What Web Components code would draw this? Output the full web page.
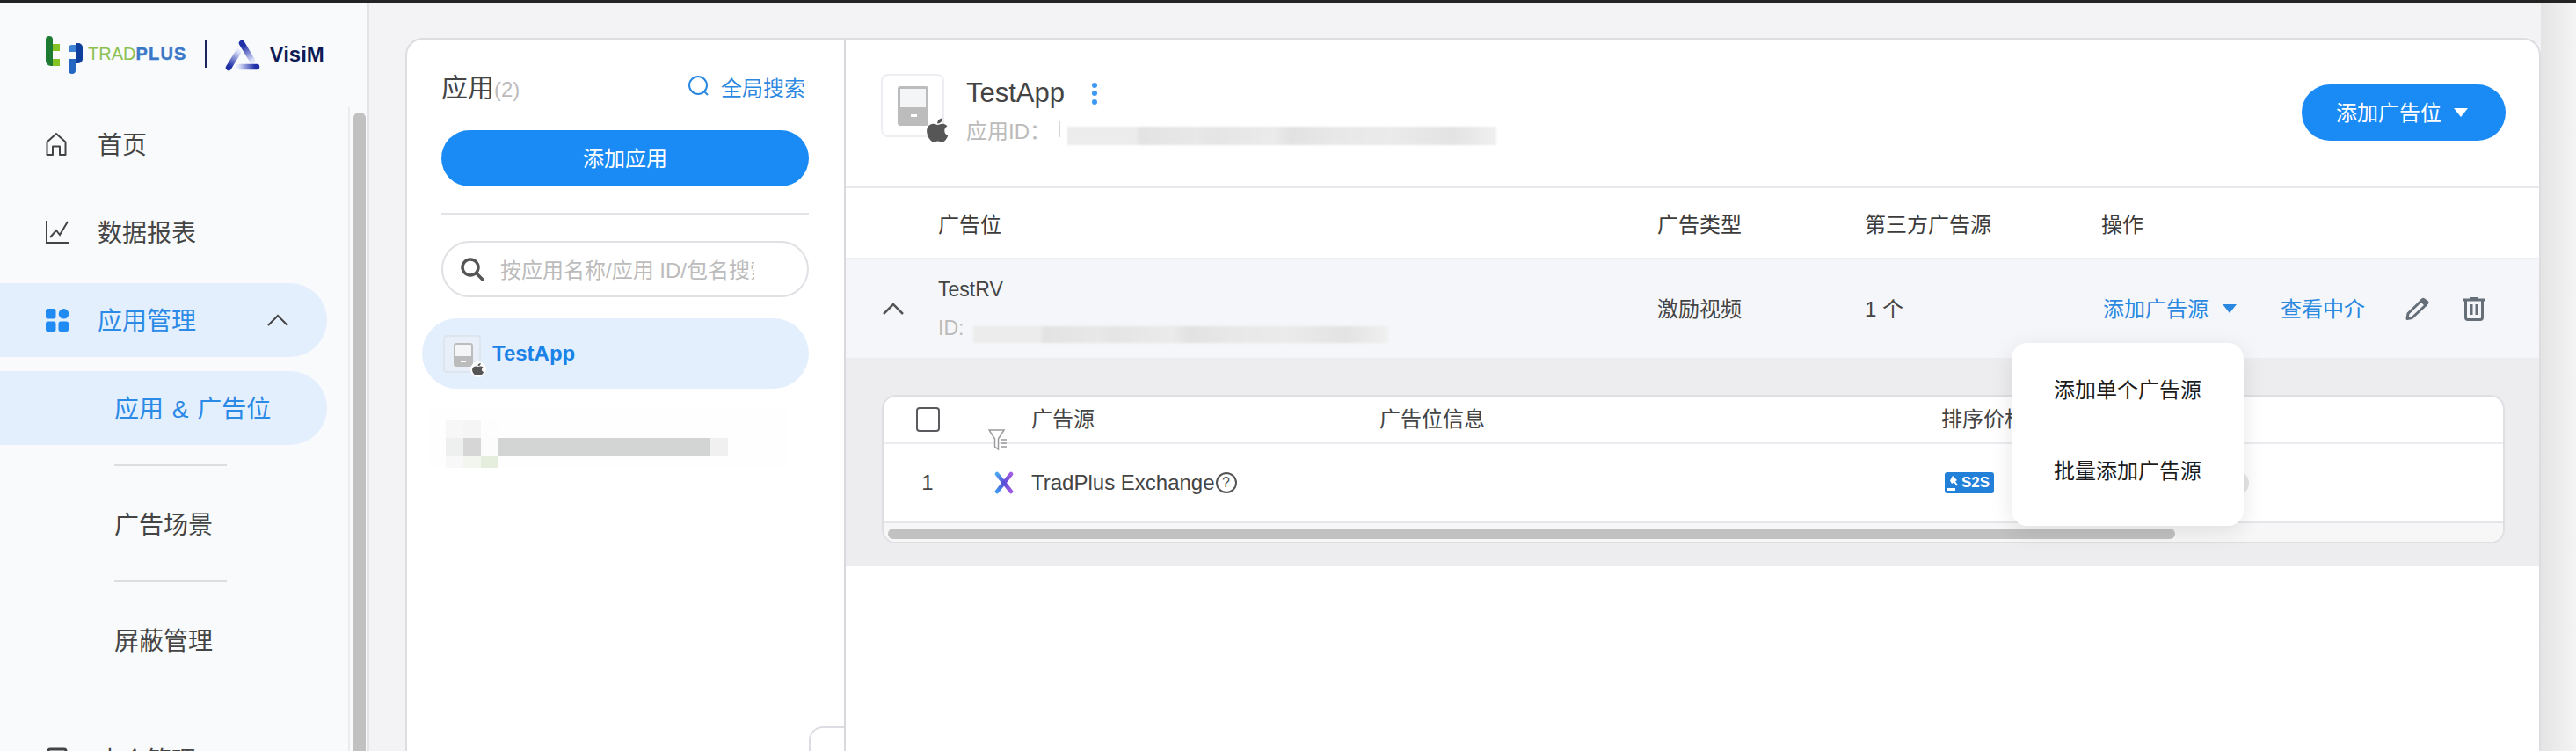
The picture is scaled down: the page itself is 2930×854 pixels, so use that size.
<!DOCTYPE html>
<html lang="zh">
<head>
<meta charset="utf-8">
<title>TradPlus</title>
<style>
  html, body { margin: 0; height: 854px; overflow: hidden; background: #f3f3f5; }
  body { font-family: "Liberation Sans", "Noto Sans CJK SC", sans-serif; color: #444; }
</style>
</head>
<body>
<ad-console>
  <side-bar slot="side">
    <nav-item icon="home">首页</nav-item>
    <nav-item icon="chart">数据报表</nav-item>
    <nav-item icon="apps" active open>应用管理</nav-item>
    <nav-item sub active>应用 &amp; 广告位</nav-item>
    <nav-line></nav-line>
    <nav-item sub>广告场景</nav-item>
    <nav-line></nav-line>
    <nav-item sub>屏蔽管理</nav-item>
    <nav-item icon="box" style="margin-top:52px">中介管理</nav-item>
  </side-bar>
  <app-list slot="list"></app-list>
  <app-detail slot="detail"></app-detail>
</ad-console>

<script>
// small helper, every element is just a template in an open shadow root
function define(name, html, setup) {
  const template = document.createElement('template');
  template.innerHTML = html;
  customElements.define(name, class extends HTMLElement {
    constructor() {
      super();
      this.attachShadow({ mode: 'open' });
      this.shadowRoot.appendChild(template.content.cloneNode(true));
    }
    connectedCallback() {
      if (setup) setup(this, this.shadowRoot);
    }
  });
}

const APPLE = 'M17.05 12.04c-.03-2.6 2.12-3.85 2.22-3.91-1.21-1.77-3.09-2.01-3.76-2.04-1.6-.16-3.12.94-3.93.94-.81 0-2.06-.92-3.39-.89-1.74.03-3.35 1.01-4.25 2.57-1.81 3.14-.46 7.8 1.3 10.35.86 1.25 1.89 2.65 3.24 2.6 1.3-.05 1.79-.84 3.36-.84 1.57 0 2.01.84 3.39.81 1.4-.02 2.28-1.27 3.14-2.53.99-1.45 1.4-2.85 1.42-2.93-.03-.01-2.72-1.04-2.74-4.13zM14.47 4.4c.72-.87 1.2-2.08 1.07-3.28-1.03.04-2.28.69-3.02 1.55-.66.77-1.24 2-1.09 3.18 1.15.09 2.32-.58 3.04-1.45z';

const NAV_ICONS = {
  home: '<svg width="26" height="28" viewBox="0 0 26 28" fill="none" stroke="currentColor" stroke-width="2"><path d="M2.5 26V11.500L13 2l10.500 9.500V26H17v-9.500H9V26z" stroke-linejoin="round"/></svg>',
  chart: '<svg width="28" height="28" viewBox="0 0 28 28" fill="none" stroke="currentColor" stroke-width="2"><path d="M2 1v25h26"/><path d="M6 20l7-8 4 5 9-15"/></svg>',
  apps: '<svg width="28" height="28" viewBox="0 0 28 28" fill="#1f8bf3"><rect x="1" y="1" width="11.500" height="11.500" rx="2.500"/><circle cx="21.500" cy="6.800" r="5.800"/><rect x="1" y="15.500" width="11.500" height="11.500" rx="2.500"/><rect x="15.500" y="15.500" width="11.500" height="11.500" rx="2.500"/></svg>',
  box: '<svg width="28" height="28" viewBox="0 0 28 28" fill="none" stroke="currentColor" stroke-width="3"><rect x="4" y="2" width="20" height="24" rx="2"/></svg>'
};

define('ad-console', `
  <style>
    :host { display: flex; flex-direction: column; height: 854px; overflow: hidden; }
    .top { height: 3px; background: #232323; flex: none; }
    .body { display: flex; flex: 1; min-height: 0; }
    .main {
      flex: 1; min-width: 0; padding: 40px 40px 0 41px;
      background: linear-gradient(to right, #e4e4e4, #f4f4f4) right top / 40px 100% no-repeat, #f3f3f5;
    }
    .panel {
      display: flex; height: 100%; box-sizing: border-box; background: #fff;
      border: 2px solid #dcdce1; border-bottom: 0; border-radius: 20px 20px 0 0; overflow: hidden;
    }
  </style>
  <div class="top"></div>
  <div class="body">
    <slot name="side"></slot>
    <div class="main">
      <div class="panel">
        <slot name="list"></slot>
        <slot name="detail"></slot>
      </div>
    </div>
  </div>
`);

define('app-logo', `
  <style>
    :host { display: flex; align-items: center; height: 119px; flex: none; box-sizing: border-box; padding: 0 0 0 52px; }
    svg { display: block; flex: none; }
    .trad { font-size: 20px; color: #8cc152; margin-left: 6px; line-height: 24px; margin-top: -3px; }
    .trad b { color: #3a78c8; letter-spacing: 1.2px; -webkit-text-stroke: .4px #3a78c8; }
    .sep { width: 2px; height: 31px; background: #1c2559; margin: -3px 21px 0 20px; }
    .visim { font-size: 24px; font-weight: 700; color: #0e1a55; margin-left: 11px; margin-top: -2px; }
  </style>
  <svg width="42" height="44" viewBox="0 0 42 44">
    <path d="M0 4a4 4 0 0 1 8 0v5h8v8H8v9h8v8H6a6 6 0 0 1-6-6z" fill="#1f7a32"/>
    <path d="M8 9h8v8H8zM8 26h8v8H8z" fill="#84c225"/>
    <path d="M26 14a4 4 0 0 1 4-4h4v8h-8z" fill="#3f82d4"/>
    <path d="M34 8h3a5 5 0 0 1 5 5v13a5 5 0 0 1-5 5h-3z" fill="#0f3f9c"/>
    <path d="M26 26h8v13a4 4 0 0 1-8 0z" fill="#2467c0"/>
  </svg>
  <span class="trad">TRAD<b>PLUS</b></span>
  <span class="sep"></span>
  <svg width="40" height="36" viewBox="0 0 40 36">
    <defs>
      <linearGradient id="a" gradientUnits="userSpaceOnUse" x1="19" y1="4" x2="31" y2="24"><stop offset=".15" stop-color="#1f2fa8"/><stop offset="1" stop-color="#dfe4fa"/></linearGradient>
      <linearGradient id="b" gradientUnits="userSpaceOnUse" x1="4" y1="32" x2="16" y2="13"><stop offset=".1" stop-color="#1f2fa8"/><stop offset="1" stop-color="#e6eafc"/></linearGradient>
      <linearGradient id="c" gradientUnits="userSpaceOnUse" x1="36" y1="31" x2="15" y2="31"><stop offset=".1" stop-color="#1f2fa8"/><stop offset="1" stop-color="#e6eafc"/></linearGradient>
    </defs>
    <line x1="19" y1="4" x2="31" y2="24" stroke="url(#a)" stroke-width="6.500" stroke-linecap="round"/>
    <line x1="4" y1="32" x2="15" y2="14" stroke="url(#b)" stroke-width="6.500" stroke-linecap="round"/>
    <line x1="36" y1="31" x2="16" y2="31" stroke="url(#c)" stroke-width="6.500" stroke-linecap="round"/>
  </svg>
  <span class="visim">VisiM</span>
`);

define('side-bar', `
  <style>
    :host {
      display: flex; flex-direction: column; width: 420px; flex: none; box-sizing: border-box;
      background: #f9fafc; border-right: 2px solid #e4e4e8; overflow: hidden; font-size: 28px;
    }
    .scroll { display: flex; flex: 1; min-height: 0; }
    nav { width: 396px; flex: none; box-sizing: border-box; }
    .bar { flex: 1; border-left: 2px solid #ececef; padding: 6px 2px 0 4px; }
    .thumb { height: 900px; background: #c1c1c1; border-radius: 6px; }
  </style>
  <app-logo></app-logo>
  <div class="scroll">
    <nav><slot></slot></nav>
    <div class="bar"><div class="thumb"></div></div>
  </div>
`);

define('nav-item', `
  <style>
    :host { display: block; margin-bottom: 16px; }
    :host([sub]) { margin-bottom: 0; }
    .row {
      display: flex; align-items: center; height: 84px; width: 372px; box-sizing: border-box;
      padding-left: 51px; border-radius: 0 42px 42px 0; color: #444; font-size: 28px;
    }
    :host([active]) .row { background: #e4effe; color: #2b8ae6; }
    :host([sub]) .row { padding-left: 130px; }
    .t { padding-bottom: 3px; word-spacing: 2px; }
    .ic { width: 28px; height: 28px; margin-right: 32px; display: flex; }
    :host([sub]) .ic { display: none; }
    .chev { margin-left: auto; margin-right: 44px; display: none; }
    :host([open]) .chev { display: block; }
  </style>
  <div class="row">
    <span class="ic"></span>
    <span class="t"><slot></slot></span>
    <svg class="chev" width="24" height="14" viewBox="0 0 24 14" fill="none" stroke="#444" stroke-width="2"><path d="M1 13L12 2l11 11"/></svg>
  </div>
`, (el, root) => {
  root.querySelector('.ic').innerHTML = NAV_ICONS[el.getAttribute('icon')] || '';
});

define('nav-line', `
  <style>
    :host { display: block; width: 128px; height: 2px; background: #dedee2; margin: 22px 0 24px 130px; }
  </style>
`);

define('blur-bar', `
  <style>
    :host { display: block; background: linear-gradient(90deg, #ececec 0, #ececec 16%, #e3e3e3 17%, #e8e8e8 30%, #e5e5e5 34%, #ebebeb 48%, #e2e2e2 52%, #e8e8e8 62%, #ebebeb 75%, #e3e3e3 90%, #f0f0f0 100%); filter: blur(1px); }
  </style>
`);

define('app-icon', `
  <style>
    :host { display: block; position: relative; flex: none; width: 72px; height: 72px; box-sizing: border-box; border: 2px solid #eceef1; border-radius: 8px; background: #fff; }
    :host([small]) { width: 43px; height: 43px; border-radius: 4px; background: #e9eff9; border-color: #dfe5ee; }
    .phone { position: absolute; left: 17px; top: 12px; width: 35px; height: 45px; box-sizing: border-box; border: 3px solid #bcbcbc; border-radius: 3px; background: linear-gradient(#f4f5f6 55%, #bcbcbc 55%); }
    .phone::after { content: ""; position: absolute; left: 12px; bottom: 7px; width: 7px; height: 3px; background: #fff; }
    :host([small]) .phone { left: 10px; top: 7px; width: 22px; height: 27px; border-width: 2px; }
    :host([small]) .phone::after { left: 6px; bottom: 3px; width: 6px; height: 2px; }
    .os { position: absolute; left: 50px; top: 48px; width: 26px; height: 28px; }
    :host([small]) .os { left: 29px; top: 28px; width: 18px; height: 18px; background: #fff; border-radius: 50%; }
    svg { display: block; width: 100%; height: 100%; fill: #565656; }
    :host([small]) svg { width: 14px; height: 14px; margin: 2px; }
  </style>
  <div class="phone"></div>
  <div class="os"><svg viewBox="3 1 18 21" preserveAspectRatio="none"><path d="${APPLE}"/></svg></div>
`);

define('app-list', `
  <style>
    :host { display: block; position: relative; width: 499px; flex: none; box-sizing: border-box; padding: 28px 40px 0 39px; border-right: 2px solid #d9d9dd; }
    .head { display: flex; align-items: center; height: 50px; margin-bottom: 25px; }
    .title { font-size: 30px; color: #444; padding-bottom: 3px; }
    .count { font-size: 24px; color: #bbb; align-self: flex-end; margin-bottom: 7px; }
    .global { margin-left: auto; display: flex; align-items: center; gap: 13px; color: #2b88e0; font-size: 24px; margin-right: 4px; }
    .global svg { margin-left: 2px; }
    .btn { height: 64px; box-sizing: border-box; padding-bottom: 3px; border-radius: 32px; background: #1a8af5; color: #fff; font-size: 24px; display: flex; align-items: center; justify-content: center; }
    hr { border: 0; height: 2px; background: #e3e3e8; margin: 30px 0; }
    .search { height: 64px; box-sizing: border-box; border: 2px solid #e0e0e5; border-radius: 32px; display: flex; align-items: center; padding-left: 20px; }
    .ph { margin-left: 18px; width: 289px; overflow: hidden; white-space: nowrap; font-size: 24px; color: #bcbcbc; padding-bottom: 2px; }
    .item { height: 80px; margin: 24px 0 0 -22px; border-radius: 40px; background: #e4effd; display: flex; align-items: center; padding-left: 24px; }
    .item b { margin-left: 13px; font-size: 24px; color: #1b82e8; }
    .blurred { margin: 22px 0 0 -14px; width: 407px; height: 67px; background: #fefefe; display: flex; align-items: center; padding-left: 19px; box-sizing: border-box; filter: blur(.6px); }
    .tiles { display: grid; grid-template-columns: repeat(3, 20px); grid-template-rows: 20px 20px 14px; margin-top: 14px; }
    .bar { width: 241px; height: 20px; background: #d3d4d4; margin-top: 21px; }
    .bar2 { width: 20px; height: 20px; background: #f0f0f0; margin-top: 21px; }
    .tab { position: absolute; right: 0; top: 781px; width: 40px; height: 60px; box-sizing: border-box; border: 2px solid #dcdde2; border-width: 2px 0 0 2px; border-radius: 16px 0 0 0; }
  </style>
  <div class="head">
    <span class="title">应用</span><span class="count">(2)</span>
    <span class="global">
      <svg width="24" height="24" viewBox="0 0 24 24" fill="none" stroke="#2b88e0" stroke-width="2"><circle cx="11" cy="11" r="10"/><path d="M18 18l4 4"/></svg>
      全局搜索
    </span>
  </div>
  <div class="btn">添加应用</div>
  <hr>
  <div class="search">
    <svg width="27" height="27" viewBox="0 0 27 27" fill="none" stroke="#555" stroke-width="3.500"><circle cx="11" cy="11" r="9"/><path d="M17.500 17.500l8.500 8.500"/></svg>
    <span class="ph">按应用名称/应用 ID/包名搜索</span>
  </div>
  <div class="item"><app-icon small></app-icon><b>TestApp</b></div>
  <div class="blurred">
    <div class="tiles">
      <i style="background:#f7f7f7"></i><i style="background:#f5f5f5"></i><i style="background:#fdfdfd"></i>
      <i style="background:#eef0ef"></i><i style="background:#d6d6d6"></i><i style="background:#fcfcfc"></i>
      <i style="background:#f8f8f8"></i><i style="background:#f3f6ee"></i><i style="background:#e5eedd"></i>
    </div>
    <div class="bar"></div><div class="bar2"></div>
  </div>
  <div class="tab"></div>
`);

define('app-detail', `
  <style>
    :host { display: block; position: relative; flex: 1; min-width: 0; }
    .head { display: flex; align-items: flex-start; padding: 39px 38px 0 40px; box-sizing: border-box; border-bottom: 2px solid #e8e8ec; height: 169px; }
    .who { margin: 2px 0 0 25px; }
    .name { display: flex; align-items: center; font-size: 31px; line-height: 40px; color: #444; }
    .dots { display: flex; flex-direction: column; gap: 3.500px; margin-left: 31px; }
    .dots i { width: 6px; height: 6px; border-radius: 50%; background: #3d97f5; }
    .id { display: flex; align-items: center; height: 40px; margin-top: 1px; color: #bbb; font-size: 24px; }
    .id i { width: 2px; height: 18px; background: #d5d5d5; margin: 0 8px 0 9px; }
    .add { margin: 12px 0 0 auto; height: 64px; width: 232px; box-sizing: border-box; padding: 0 4px 3px 0; border-radius: 32px; background: #1a8af5; color: #fff; font-size: 24px; display: flex; align-items: center; justify-content: center; gap: 14px; }
    .tri { width: 0; height: 0; border: 8px solid transparent; border-bottom: 0; border-top: 10px solid currentColor; }
    .add .tri { margin-top: 3px; }
    .cols { display: grid; grid-template-columns: 105px 818px 236px 269px 1fr; align-items: center; }
    .thead { height: 79px; border-bottom: 2px solid #eceef2; font-size: 24px; color: #3c3c3c; }
    .row { height: 112px; background: #f4f6fa; font-size: 24px; color: #444; }
    .row > span { padding-bottom: 3px; }
    .chev { justify-self: center; margin-left: 2px; }
    .line { line-height: 44px; font-size: 23px; }
    .rid { display: flex; align-items: center; color: #bbb; position: relative; }
    .ops { display: flex; align-items: center; color: #2b88e0; font-size: 24px; padding-left: 2px; }
    .ops b { font-weight: 400; padding-bottom: 3px; }
    .ops .tri { margin: 0 0 0 16px; }
    .ops .view { margin-left: 50px; }
    .ops .pen { margin-left: 46px; }
    .ops .bin { margin-left: 38px; }
    .expand { background: #ededef; padding: 42px 39px 26px 41px; }
  </style>
  <div class="head">
    <app-icon></app-icon>
    <div class="who">
      <div class="name">TestApp <span class="dots"><i></i><i></i><i></i></span></div>
      <div class="id">应用ID： <i></i><blur-bar style="width:488px;height:21px;margin-top:15px"></blur-bar></div>
    </div>
    <div class="add">添加广告位 <span class="tri"></span></div>
  </div>
  <div class="cols thead">
    <span></span><span>广告位</span><span>广告类型</span><span>第三方广告源</span><span>操作</span>
  </div>
  <div class="cols row">
    <svg class="chev" width="24" height="14" viewBox="0 0 24 14" fill="none" stroke="#555" stroke-width="2.500"><path d="M1 13L12 2l11 11"/></svg>
    <div>
      <div class="line">TestRV</div>
      <div class="line rid">ID: <blur-bar style="width:472px;height:19px;margin:14px 0 0 11px"></blur-bar></div>
    </div>
    <span>激励视频</span>
    <span>1 个</span>
    <div class="ops">
      <b>添加广告源</b><span class="tri"></span>
      <b class="view">查看中介</b>
      <svg class="pen" width="28" height="26" viewBox="0 0 28 26" fill="none" stroke="#666e78" stroke-width="3" stroke-linejoin="round"><path d="M2 24.500l1-6L18 4l5 5L7.500 23.500z"/><path d="M18.500 1.500a2.500 2.500 0 0 1 3.500 0l4 3a2.500 2.500 0 0 1 0 3L23.500 10 16 3.500z" fill="#666e78" stroke="none"/></svg>
      <svg class="bin" width="24" height="28" viewBox="0 0 24 28" fill="none" stroke="#666e78"><path d="M0 4h24" stroke-width="3"/><path d="M8 2.500h8" stroke-width="3"/><path d="M2.500 4v20a2.500 2.500 0 0 0 2.500 2.500h14a2.500 2.500 0 0 0 2.500-2.500V4" stroke-width="3"/><path d="M9 9v12M15 9v12" stroke-width="3"/></svg>
    </div>
  </div>
  <div class="expand"><source-card></source-card></div>
  <drop-menu style="left:1326px;top:345px">
    <span>添加单个广告源</span>
    <span>批量添加广告源</span>
  </drop-menu>
`);

define('source-card', `
  <style>
    :host { display: block; position: relative; background: #fff; border: 2px solid #dfdfe3; border-radius: 16px; overflow: hidden; font-size: 24px; color: #444; }
    .cols { display: grid; grid-template-columns: 168px 396px 639px 1fr; align-items: center; }
    .thead { height: 52px; border-bottom: 2px solid #ecedf1; }
    .thead span { padding-bottom: 5px; }
    .check { width: 27px; height: 28px; box-sizing: border-box; border: 2px solid #5a5a5f; border-radius: 4px; margin-left: 37px; }
    .body { height: 88px; border-bottom: 2px solid #e6e6ea; font-size: 24px; }
    .first { display: flex; align-items: center; }
    .idx { width: 100px; text-align: center; }
    .x { margin-left: 25px; }
    .src { display: flex; align-items: center; white-space: nowrap; }
    .help { flex: none; width: 24px; height: 24px; box-sizing: border-box; margin-left: 1px; border: 2px solid #555; border-radius: 50%; font-size: 16px; line-height: 20px; text-align: center; color: #555; }
    .first .src { margin-left: 19px; }
    .s2s { display: flex; align-items: center; gap: 2px; width: 56px; height: 24px; box-sizing: border-box; padding-left: 3px; background: #2280d8; border-radius: 3px; color: #fff; font-weight: 700; font-size: 17px; margin-left: 4px; overflow: hidden; }
    .pill { height: 25px; width: 268px; background: #e6e6e8; border-radius: 12px; margin-left: 22px; }
    .price { display: flex; align-items: center; }
    .track { height: 21px; padding-top: 6px; box-sizing: border-box; background: #f7f7f8; }
    .thumb { width: 1464px; height: 12px; margin-left: 5px; background: #c1c1c1; border-radius: 6px; }
    .filter { position: absolute; left: 119px; top: 37px; }
  </style>
  <div class="cols thead">
    <div class="check"></div><span>广告源</span><span>广告位信息</span><span>排序价格</span>
  </div>
  <svg class="filter" width="24" height="24" viewBox="0 0 24 24" fill="#fff" stroke="#9a9a9e" stroke-width="1.500"><path d="M1 1h17l-6.500 10v12L7.500 20v-9z"/><path d="M15 12h6M15 16h6M15 20h6" fill="none"/></svg>
  <div class="cols body">
    <div class="first" style="grid-column: 1 / span 2">
      <span class="idx">1</span>
      <svg class="x" width="24" height="26" viewBox="0 0 24 26" fill="none" stroke-width="4.500" stroke-linecap="round" style="filter:blur(.5px)">
        <defs>
          <linearGradient id="l" gradientUnits="userSpaceOnUse" x1="4" y1="3" x2="20" y2="23"><stop offset="0" stop-color="#4aa6f2"/><stop offset=".5" stop-color="#5a4bd6"/><stop offset="1" stop-color="#a05ce2"/></linearGradient>
          <linearGradient id="r" gradientUnits="userSpaceOnUse" x1="20" y1="3" x2="4" y2="23"><stop offset="0" stop-color="#a05ce2"/><stop offset=".5" stop-color="#5a4bd6"/><stop offset="1" stop-color="#3f9af0"/></linearGradient>
        </defs>
        <path d="M4 3l16 20" stroke="url(#l)"/><path d="M20 3L4 23" stroke="url(#r)"/>
      </svg>
      <span class="src">TradPlus Exchange<span class="help">?</span></span>
    </div>
    <span></span>
    <div class="price" style="grid-column: 4">
      <span class="s2s">
        <svg width="14" height="18" viewBox="0 0 14 18" fill="#fff"><path d="M6 1l5 5-2 1.500 3 4-1.500 1-3-4L5 10 3 6.500zM0 15h9v3H0z"/></svg>
        S2S
      </span>
      <span class="pill"></span>
    </div>
  </div>
  <div class="track"><div class="thumb"></div></div>
`);

define('drop-menu', `
  <style>
    :host { position: absolute; display: block; width: 264px; box-sizing: border-box; padding: 7px 0 17px; background: #fff; border-radius: 18px; box-shadow: 0 6px 26px rgba(0, 0, 0, .1); }
    ::slotted(span) { display: flex; align-items: center; justify-content: center; height: 92px; box-sizing: border-box; padding-bottom: 3px; font-size: 24px; color: #1c1c1c; }
  </style>
  <slot></slot>
`);
</script>
</body>
</html>
